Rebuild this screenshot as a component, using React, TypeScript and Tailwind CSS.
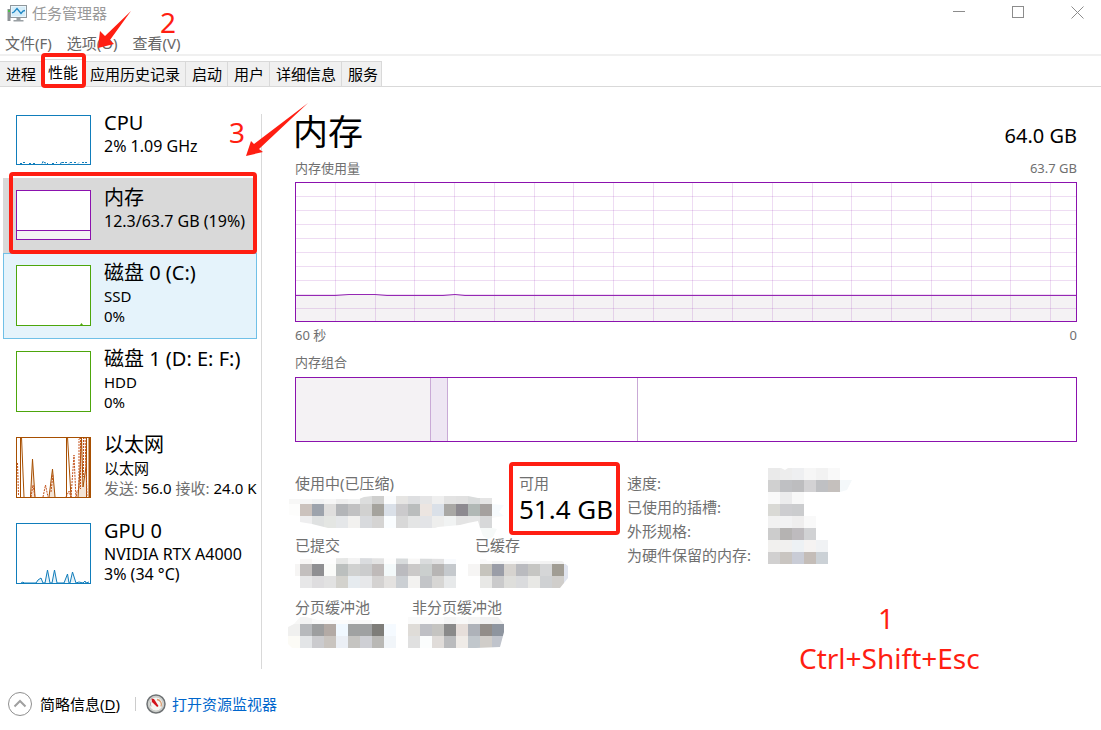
import type { ReactNode } from 'react';

const CELL = 12;

type MosaicProps = {
  cols: number;
  rows: string[];
  clip?: string;
  id: string;
  shift?: [number, number];
};

/** Pixelated patch; each row lists hex colours, "-" leaves a cell empty. */
function Mosaic({ cols, rows, clip, id, shift = [0, 0] }: MosaicProps) {
  return (
    <svg
      width={cols * CELL}
      height={rows.length * CELL}
      className="block shrink-0 overflow-visible"
      shapeRendering="crispEdges"
      aria-hidden="true"
    >
      {clip && (
        <clipPath id={id}>
          <polygon points={clip} />
        </clipPath>
      )}
      <g transform={`translate(${shift[0]} ${shift[1]})`}>
        <g clipPath={clip ? `url(#${id})` : undefined}>
          {rows.map((row, y) =>
            row.split(' ').map((c, x) =>
              c === '-' ? null : (
                <rect key={`${x}-${y}`} x={x * CELL} y={y * CELL} width={CELL} height={CELL} fill={`#${c}`} />
              ),
            ),
          )}
        </g>
      </g>
    </svg>
  );
}

function MarkBox({ className }: { className: string }) {
  return <span aria-hidden="true" className={`pointer-events-none absolute z-10 rounded border-4 border-[#ff1e12] ${className}`} />;
}

function TitleBar() {
  return (
    <header>
      <div className="flex h-[25px] items-center justify-between pl-[7px] pr-[17px] text-[#999999]">
        <div className="flex items-center gap-1">
          <svg width="21" height="18" viewBox="0 0 21 18" aria-hidden="true">
            <rect x="0.5" y="5" width="3" height="12" fill="#8d9296" />
            <rect x="1" y="6" width="2" height="2" fill="#4fbf4a" />
            <rect x="3.5" y="1.5" width="16" height="12" fill="#e9f6fd" stroke="#8f979c" />
            <rect x="5" y="3" width="13" height="9" fill="#d5edf9" />
            <path d="M5 9l2-1 3-3.500 4 5 2-2.500 2-.5" fill="none" stroke="#1c86c4" strokeWidth="1.300" />
            <path d="M9.500 14h4v2h3v1.500h-10V16h3z" fill="#9aa0a4" />
          </svg>
          <h1>任务管理器</h1>
        </div>
        <div className="flex items-center gap-[46px]">
          <button aria-label="最小化">
            <svg width="13" height="13" className="block" shapeRendering="crispEdges">
              <path d="M0 5.500h12" stroke="#8c8c8c" />
            </svg>
          </button>
          <button aria-label="最大化">
            <svg width="13" height="13" className="block" shapeRendering="crispEdges">
              <rect x="0.500" y="0.500" width="11" height="11" fill="none" stroke="#8c8c8c" />
            </svg>
          </button>
          <button aria-label="关闭">
            <svg width="13" height="13" className="block">
              <path d="M.5.5l12 12M12.500.5l-12 12" stroke="#8c8c8c" />
            </svg>
          </button>
        </div>
      </div>
      <nav className="flex gap-[15px] border-b-2 border-[#f0f0f0] pb-px pl-[5px] pt-2 leading-5 text-[#666666]">
        <button>文件(F)</button>
        <button>选项(O)</button>
        <button>查看(V)</button>
      </nav>
    </header>
  );
}

const tabs = ['进程', '性能', '应用历史记录', '启动', '用户', '详细信息', '服务'];

function Tabs() {
  return (
    <div role="tablist" className="flex border-b border-[#d9d9d9] pt-[5px]">
      {tabs.map((t) =>
        t === '性能' ? (
          <button key={t} role="tab" aria-selected="true" className="relative -mb-px -mt-0.5 h-7 border-t border-[#d9d9d9] bg-white px-1.5 pb-1">
            {t}
            <MarkBox className="-bottom-px -left-px -right-0.5 -top-[7px]" />
          </button>
        ) : (
          <button key={t} role="tab" aria-selected="false" className="h-[25px] border-r border-t border-[#d9d9d9] bg-[#f0f0f0] pl-1.5 pr-[5px] last:pr-[3px]">
            {t}
          </button>
        ),
      )}
    </div>
  );
}

type ItemProps = {
  title: string;
  chart: ReactNode;
  short?: boolean;
  state?: 'selected' | 'hover';
  children: ReactNode;
};

function SideItem({ title, chart, short, state, children }: ItemProps) {
  const tone =
    state === 'selected'
      ? 'border-[#d9d9d9] bg-[#d9d9d9]'
      : state === 'hover'
        ? 'border-[#70c0e7] bg-[#e5f3fb]'
        : 'border-transparent';
  return (
    <li className="relative">
      <button className={`flex w-[254px] items-start gap-[13px] whitespace-nowrap border pl-3 text-left ${short ? 'h-[75px]' : 'h-[86px]'} ${tone}`}>
        <span className="mt-[11px] block shrink-0">{chart}</span>
        <span className="mt-[5px] block leading-5">
          <span className="block text-[20px] leading-[27px]">{title}</span>
          {children}
        </span>
      </button>
      {state === 'selected' && <MarkBox className="-bottom-px right-0 -top-1.5 left-1.5" />}
    </li>
  );
}

function Mini({ h, color, children }: { h: number; color: string; children?: ReactNode }) {
  return (
    <svg width="75" height={h} className="block" aria-hidden="true">
      <rect x="0.500" y="0.500" width="74" height={h - 1} fill="#fff" />
      {children}
      <rect x="0.500" y="0.500" width="74" height={h - 1} fill="none" stroke={color} />
    </svg>
  );
}

function Sidebar() {
  return (
    <ul className="w-[257px] shrink-0 pl-[3px] pt-4">
      <SideItem
        title="CPU"
        short
        chart={
          <Mini h={50} color="#117dbb">
            <path
              d="M4 48.500h2M7 47.500h2M13 48.500h2M17 48.500h2M26 48.500l1-2 1 1 2 .5M31 48.500h1M36 48.500h2M40 47.500h1M44 48.500l2-1h2M49 47.500h2M53 48.500l1-1h2M58 47.500h2M62 48.500l1-1M66 47.500h2M69 47.500h2"
              fill="none"
              stroke="#117dbb"
            />
          </Mini>
        }
      >
        <span className="block text-base leading-5">2% 1.09 GHz</span>
      </SideItem>
      <SideItem
        title="内存"
        short
        state="selected"
        chart={
          <Mini h={50} color="#8b12ae">
            <rect x="1" y="40" width="73" height="9" fill="#f4f2f4" />
            <path d="M0 40.500h75" stroke="#8b12ae" />
          </Mini>
        }
      >
        <span className="block text-base leading-5">12.3/63.7 GB (19%)</span>
      </SideItem>
      <SideItem
        title="磁盘 0 (C:)"
        state="hover"
        chart={
          <Mini h={61} color="#4da60c">
            <path d="M64 60l1.500-2 1.500 2z" fill="#4da60c" />
          </Mini>
        }
      >
        <span className="block">SSD</span>
        <span className="block">0%</span>
      </SideItem>
      <SideItem title="磁盘 1 (D: E: F:)" chart={<Mini h={61} color="#4da60c" />}>
        <span className="block">HDD</span>
        <span className="block">0%</span>
      </SideItem>
      <SideItem
        title="以太网"
        chart={
          <Mini h={61} color="#a74f01">
            <g fill="#f3e4d6" stroke="#a74f01">
              <path d="M4.500 0V60M5.500 0L8 60" />
              <path d="M14.500 60L16.500 22 19 60" />
              <path d="M33 60L36.500 32 39 60" />
              <path d="M50.500 0V60M51.500 0L55 60" />
              <path d="M62 60L64 32 65.500 0 67 50 70 30 70.500 0V60" />
              <path d="M73.500 0V60" strokeWidth="2" />
            </g>
            <g fill="none" stroke="#c4511a" strokeDasharray="2 1">
              <path d="M1.500 26L2.500 58M15 60l2-12 2 12M27 60L29.500 48 32 60M35 55l2-18M50 60l3-6 2 6 3-42 2 44 1-8 2-2V2L65 0" />
              <path d="M64.500 0V52M67.500 0V40M69 0l2 60" />
            </g>
          </Mini>
        }
      >
        <span className="block">以太网</span>
        <span className="block">
          <span className="text-[#707070]">发送: </span>56.0 <span className="text-[#707070]">接收: </span>24.0 K
        </span>
      </SideItem>
      <SideItem
        title="GPU 0"
        chart={
          <Mini h={61} color="#117dbb">
            <path
              d="M5 60l2-1 1 1h12l2-3 3-2 2 5h2L31.500 47 34 60h2L38.500 47 41 60h7L51.500 51 53 60h1L56.500 49 60 60l3-1 4 1 2-2 1 2 3-1"
              fill="#e7f2f8"
              stroke="#117dbb"
            />
          </Mini>
        }
      >
        <span className="block text-base leading-5">NVIDIA RTX A4000</span>
        <span className="block text-base leading-5">3% (34 °C)</span>
      </SideItem>
    </ul>
  );
}

const gridX = Array.from({ length: 19 }, (_, i) => Math.round(40 + i * 39.72) + 0.5);
const gridY = Array.from({ length: 9 }, (_, i) => 14 * (i + 1) + 0.5);

function UsageChart() {
  return (
    <svg viewBox="0 0 782 140" preserveAspectRatio="none" className="mt-[3px] block h-[140px] w-full" aria-label="内存使用量">
      <path d="M0 113.500H40L54 112.500H80L92 113.500H148L160 112.500 170 113.500H782V140H0z" fill="#f4f2f4" />
      <g stroke="#8b12ae" strokeOpacity="0.150" shapeRendering="crispEdges">
        {gridX.map((x) => (
          <path key={x} d={`M${x} 0V140`} />
        ))}
        {gridY.map((y) => (
          <path key={y} d={`M0 ${y}H782`} />
        ))}
      </g>
      <path d="M0 113.500H40L54 112.500H80L92 113.500H148L160 112.500 170 113.500H782" fill="none" stroke="#9528b4" />
      <rect x="0.500" y="0.500" width="781" height="139" fill="none" stroke="#8b12ae" />
    </svg>
  );
}

function Stat({ label, width, children }: { label: string; width?: string; children: ReactNode }) {
  return (
    <div className={`relative h-[62px] ${width ?? ''}`}>
      <dt className="leading-5 text-[#707070]">{label}</dt>
      {children}
    </div>
  );
}

function Stats() {
  return (
    <section className="mt-[31px] flex items-start">
      <dl className="w-[332px] shrink-0">
        <div className="flex">
          <Stat label="使用中(已压缩)" width="w-[224px]">
            <dd className="-ml-[7px] -mt-[5px]">
              <Mosaic
                id="m-used"
                cols={18}
                shift={[0, 4]}
                clip="1,7 71,7 76,5 84,4 180,4 190,6 204,6 204,12 216,13 211,20 216,24 204,26 204,36 209,37 205,45 200,47 195,44 192,36 190,29 180,31 172,33 150,35 147,36 40,36 24,32 12,30 12,24 1,23"
                rows={[
                  'f7f7f6 f6f6f6 f1f2f3 f6f6f6 eeeeee f1f2f2 dcdddd cfcfce fbfcfd e6e5e3 dedfe1 e5e5e6 efefef e3e3e3 e1e1e1 dadcdc e5e5e5',
                  'fdfdfc cbc2bd 9da3ac dfdedd b3b5b8 c1c1c2 d1d1d0 a5a39d dae0e8 cbcacc babdbd ece5e1 dae0e8 a9a8a5 8d8a90 b1b8b5 a5a19f f6fafd',
                  '- eeeeef dfe1e1 e4e6e3 e5e7e9 f2f1ef d8dadd d5d4d3 fafdff d8d8d8 e4e5e5 e3e4e7 eeeeed f1f3f3 e4e4e4 e5e5e5 d7d8d9 fafafa',
                  '- - - - - - - - - - - - - - - - f6f9f8 f6f9f8',
                ]}
              />
            </dd>
          </Stat>
          <Stat label="可用">
            <dd className="whitespace-nowrap text-[26px] leading-8">51.4 GB</dd>
            <MarkBox className="-left-2.5 -right-[7px] -top-[11px] bottom-0" />
          </Stat>
        </div>
        <div className="flex">
          <Stat label="已提交" width="w-[180px]">
            <dd className="-ml-[7px] -mt-[5px]">
              <Mosaic
                id="m-commit"
                cols={14}
                shift={[0, 2]}
                clip="7,12 12,12 12,7 60,6 168,7 168,36 12,36 12,24 7,24"
                rows={[
                  '- f8f6f5 fdfdfd fdfdfd e6e7e6 f3f3f3 dadcdf e3e3e3 fdfdfd d8dbdc f8f7f6 dadcdd e2e2e3 f8fafd',
                  'f6f5f4 c3bfbe 8f8f92 fafbf9 bbbfbe d0d1d0 cbcccd bfbab9 f3f9fa bbbbbf cbc9c8 cbcfce b7b5b4 c5c9cd',
                  '- e7e7e8 dedddf e2e2e2 d3d2cd e6ebef e7e8ea d4d2d1 e4e2e0 cbcfd3 f3f2f0 c3c5c8 d7d6d4 e7e9ea',
                ]}
              />
            </dd>
          </Stat>
          <Stat label="已缓存">
            <dd className="-ml-[7px] -mt-[5px]">
              <Mosaic
                id="m-cached"
                cols={9}
                shift={[0, 2]}
                clip="0,12 12,12 12,7 18,7 19,9 94,9 100,14 100,26 92,36 12,36 12,24 0,24"
                rows={[
                  '- fafafa f3f4f4 f7f7f7 f4f4f4 f6f6f6 f3f3f3 f0f0f0 -',
                  'f6f5f4 c6c4bd 9a9da7 d6d3cf babbbf c6c6c3 d5d6d7 a19d94 e0e4ee',
                  '- e8e8e6 cacacb dededb dadbdd e8e8e5 cfd1d3 d0cecb e0e4ee',
                ]}
              />
            </dd>
          </Stat>
        </div>
        <div className="flex">
          <Stat label="分页缓冲池" width="w-[117px]">
            <dd className="-ml-[7px] -mt-[5px]">
              <Mosaic
                id="m-paged"
                cols={9}
                clip="0,15 6,12 12,5 18,5 30,8 84,8 84,12 108,12 108,36 4,36 0,32"
                rows={[
                  'f7f7f6 f3f3f3 f9f9f9 fafafa fcfcfc f9f9f9 f9f9f9 f6f6f6 -',
                  'f0f0ef b7b9bc 9d9e9f b3aaa5 f0f8ff a0a2a2 9fa1a2 7e7d79 f5faff',
                  'fcfbf6 e3e5e7 cbcbce c9c4bf ebeff5 c5c4c1 cecfd4 b9b8b5 f1f5f9',
                ]}
              />
            </dd>
          </Stat>
          <Stat label="非分页缓冲池">
            <dd className="-ml-[7px] -mt-[5px]">
              <Mosaic
                id="m-nonpaged"
                cols={8}
                shift={[3, 0]}
                clip="0,5 90,5 96,12 96,20 92,35 68,36 0,36"
                rows={[
                  'fafafa fbfbfb fafafa f5f5f5 f9f9f9 f5f5f5 f1f1f1 f0f0f0',
                  'dfdcd8 bfc0c5 c5c4c1 8a8a8a e6deda aeb2b9 928d89 8e959f',
                  'e0e0e0 fbfdfd e0dcd9 babbbd efebe7 c1c7cc d0cdc9 c0c4cc',
                ]}
              />
            </dd>
          </Stat>
        </div>
      </dl>
      <div className="-mt-[5px] flex items-start">
        <ul className="w-[141px] pt-[3px] leading-6 text-[#707070]">
          <li>速度:</li>
          <li>已使用的插槽:</li>
          <li>外形规格:</li>
          <li>为硬件保留的内存:</li>
        </ul>
        <Mosaic
          id="m-spec"
          cols={7}
          clip="0,0 13,0 17,2 20,0 72,0 72,12 84,12 79,22 72,24 72,96 0,96"
          rows={[
            'eaeaea ededed eeeff1 f6f6f6 f2f2f2 f9f9f9',
            'd0d0d0 bfc0c3 bdbdbf d3d2d4 bfc0c3 c5c0bd f4f8fa',
            'f9f9f9 ececed f8f8f8',
            'd9d9d5 cdcdd0 cbccce',
            'f1f1f1 f2f2f3 efeeee f9f9f9',
            'cccccc b5b3b2 bebbbe d1d2d4',
            'f1f0ee f1f0ef edf1f4 f5f3f2 f0f2f4',
            'd1d0d0 c9c5c1 c9ccd6 c4bdb8 cbd1d6',
          ]}
        />
      </div>
    </section>
  );
}

function MemoryPanel() {
  return (
    <main className="min-w-0 flex-1 pl-[33px] pr-6 pt-[23px]">
      <div className="flex items-center justify-between">
        <h2 className="-ml-0.5 text-[35px] leading-[44px]">内存</h2>
        <span className="pt-2 text-[20px] leading-7">64.0 GB</span>
      </div>
      <div className="mt-1 flex justify-between text-[13px] leading-5 text-[#707070]">
        <span>内存使用量</span>
        <span>63.7 GB</span>
      </div>
      <div className="pt-px">
        <UsageChart />
      </div>
      <div className="mt-[3px] flex justify-between text-[13px] leading-5 text-[#707070]">
        <span>60 秒</span>
        <span>0</span>
      </div>
      <h3 className="mt-[7px] text-[13px] leading-5 text-[#707070]">内存组合</h3>
      <div className="mt-[5px] flex h-[65px] border border-[#8b12ae]">
        <div className="w-[17.3%] border-r border-[#c9a9d6] bg-[#f4f2f4]" />
        <div className="w-[2.2%] border-r border-[#c9a9d6] bg-[#eee6f3]" />
        <div className="w-[24.3%] border-r border-[#c9a9d6]" />
      </div>
      <Stats />
    </main>
  );
}

function Footer() {
  return (
    <footer className="flex h-[61px] items-center pl-2 pt-2">
      <button className="flex items-center gap-2">
        <svg width="24" height="24" fill="none" aria-hidden="true">
          <circle cx="12" cy="12" r="11.500" stroke="#8f8f8f" />
          <path d="M6.500 14.500l5.500-5.500 5.500 5.500" stroke="#a0a0a0" strokeWidth="2" />
        </svg>
        <span>
          简略信息(<u className="underline-offset-2">D</u>)
        </span>
      </button>
      <span className="ml-[15px] mr-[10px] h-3.5 w-px bg-[#cccccc]" />
      <a href="#resmon" className="flex items-center gap-[6px] text-[#0066cc]">
        <svg width="20" height="20" viewBox="0 0 20 20" aria-hidden="true">
          <circle cx="10" cy="10" r="9" fill="#d5d6d3" stroke="#6e7274" strokeWidth="1.500" />
          <circle cx="10" cy="10" r="7" fill="#f5f5f2" stroke="#b9bbb8" strokeWidth="0.700" />
          <path d="M11 5.500a5 5 0 0 1 4 7" fill="none" stroke="#d9996e" strokeWidth="1.300" />
          <path d="M5 12.500a6 6 0 0 1 0-5" fill="none" stroke="#aaa" />
          <path d="M5.500 4.500l2.500.5 4.500 7-1.300 1L6 8z" fill="#d3131b" />
        </svg>
        打开资源监视器
      </a>
    </footer>
  );
}

function Annotations() {
  return (
    <div aria-hidden="true" className="pointer-events-none absolute inset-0 z-20 text-[28px] leading-5 text-[#ff1e12]">
      <svg width="320" height="170" className="absolute left-0 top-0" fill="#ff1e12">
        <path d="M131 11L105 36l-5-5-2 17 16-4-4-4z" />
        <path d="M308 103L254 144l-3-3-5 15 17-4-4-3z" />
      </svg>
      <span className="absolute left-[160px] top-[12px]">2</span>
      <span className="absolute left-[229px] top-[122px]">3</span>
      <span className="absolute left-[878px] top-[608px]">1</span>
      <span className="absolute left-[799px] top-[648px]">Ctrl+Shift+Esc</span>
    </div>
  );
}

export default function App() {
  return (
    <div className="relative flex min-h-screen flex-col bg-white font-['Noto_Sans','Noto_Sans_CJK_SC',sans-serif] text-[15px] leading-5 text-black">
      <TitleBar />
      <Tabs />
      <div className="flex flex-1">
        <div className="w-[261px] shrink-0 overflow-hidden">
          <Sidebar />
        </div>
        <div className="mt-[27px] w-px shrink-0 bg-[#d9d9d9]" />
        <MemoryPanel />
      </div>
      <Footer />
      <Annotations />
    </div>
  );
}
